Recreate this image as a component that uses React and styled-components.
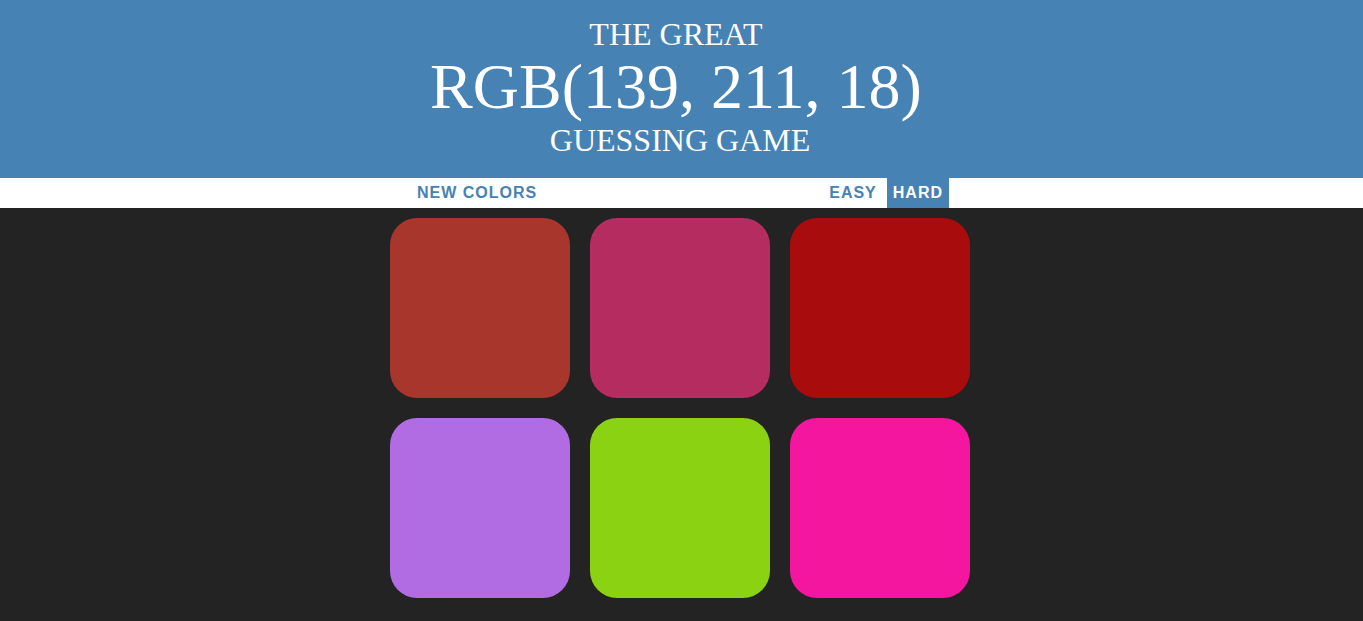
import React from "react"
import styled, { createGlobalStyle } from "styled-components"

const colors = [
  "rgb(169, 54, 45)",
  "rgb(180, 44, 96)",
  "rgb(169, 12, 13)",
  "rgb(178, 108, 227)",
  "rgb(139, 211, 18)",
  "rgb(245, 22, 159)",
]

const GlobalStyle = createGlobalStyle`
  body {
    margin: 0;
    padding-right: 3px;
    background: #232323;
    font-family: "Liberation Sans", Arial, sans-serif;
  }
`

const App = () => {
  return (
    <>
      <GlobalStyle />
      <Header>
        The Great{"\u00a0"}
        <br />
        <ColorDisplay>RGB(139, 211, 18)</ColorDisplay>{"\u00a0"}
        <br />
        Guessing Game
      </Header>
      <Stripe>
        <Button>New Colors</Button>
        <Message />
        <Button>Easy</Button>
        <Button selected>Hard</Button>
      </Stripe>
      <Container>
        {colors.map((c, i) => (
          <Square key={i} $color={c} />
        ))}
      </Container>
    </>
  )
}

export default App

const Header = styled.h1`
  margin: 0 -3px 0 0;
  padding: 17px 3px 20px 0;
  background: steelblue;
  color: white;
  text-align: center;
  text-transform: uppercase;
  font-family: "Liberation Serif", "Times New Roman", serif;
  font-weight: normal;
  font-size: 32px;
  line-height: 1.1;
`

const ColorDisplay = styled.span`
  font-size: 200%;
`

const Stripe = styled.div`
  display: flex;
  justify-content: center;
  gap: 4px;
  height: 30px;
  margin-right: -3px;
  padding-right: 3px;
  background: white;
`

const Message = styled.span`
  width: 20%;
`

const Button = styled.button`
  border: none;
  margin: 0;
  padding: 0 6px;
  height: 100%;
  background: ${p => (p.selected ? "steelblue" : "none")};
  color: ${p => (p.selected ? "white" : "steelblue")};
  font-family: "Liberation Sans", Arial, sans-serif;
  font-size: 16px;
  font-weight: 700;
  letter-spacing: 1px;
  text-transform: uppercase;
  outline: none;
`

const Container = styled.div`
  width: 600px;
  margin: 0 auto;
  display: flex;
  flex-wrap: wrap;
`

const Square = styled.div`
  width: 180px;
  height: 180px;
  margin: 10px;
  border-radius: 27px;
  background: ${p => p.$color};
`
